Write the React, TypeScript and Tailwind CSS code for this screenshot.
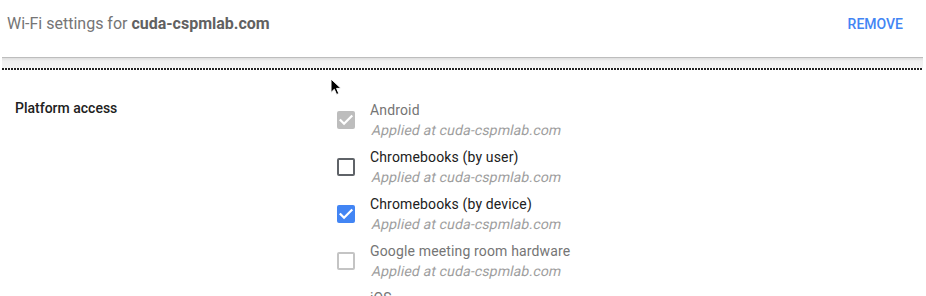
import React from "react";

type Platform = {
  name: string;
  state: "checked" | "unchecked" | "disabled-checked" | "disabled";
};

const PLATFORMS: Platform[] = [
  { name: "Android", state: "disabled-checked" },
  { name: "Chromebooks (by user)", state: "unchecked" },
  { name: "Chromebooks (by device)", state: "checked" },
  { name: "Google meeting room hardware", state: "disabled" },
  { name: "iOS", state: "disabled" },
];

function CheckMark() {
  return (
    <svg width="18" height="18" viewBox="0 0 24 24" fill="none">
      <path d="M4.8 12.3l4.6 4.6L19.3 7" stroke="white" strokeWidth="3" strokeLinecap="square" />
    </svg>
  );
}

function Box({ state }: { state: Platform["state"] }) {
  if (state === "checked") {
    return (
      <div className="w-[18px] h-[18px] rounded-[2px] bg-[#4285f4] flex items-center justify-center">
        <CheckMark />
      </div>
    );
  }
  if (state === "disabled-checked") {
    return (
      <div className="w-[18px] h-[18px] rounded-[2px] bg-[#bdbdbd] flex items-center justify-center">
        <CheckMark />
      </div>
    );
  }
  if (state === "disabled") {
    return <div className="w-[18px] h-[18px] rounded-[2px] border-2 border-[#c4c4c4]" />;
  }
  return <div className="w-[18px] h-[18px] rounded-[2px] border-2 border-[#5f6368]" />;
}

export default function App() {
  return (
    <div className="relative w-full h-[296px] overflow-hidden bg-white font-['Roboto',sans-serif]">
      {/* Header */}
      <div className="h-[57px] flex items-start justify-between pl-[7px] pr-[23px] pt-[14px]">
        <div className="text-[16px] leading-[20px] text-[#757575]">
          Wi-Fi settings for <span className="font-bold text-[#616161]">cuda-cspmlab.com</span>
        </div>
        <button className="text-[14px] leading-[20px] font-medium text-[#4285f4] uppercase">
          Remove
        </button>
      </div>

      {/* Divider band */}
      <div className="ml-[2px] mr-[3px]">
        <div className="h-[11px] border-t border-[#bdbdbd] bg-gradient-to-b from-[#dedede] via-[#f0f0f0] via-30% to-[#f3f3f3]" />
        <div className="h-[2px] bg-[repeating-linear-gradient(90deg,#222_0_2px,transparent_2px_3px)]" />
      </div>

      {/* Platform access */}
      <div className="flex pt-[28px]">
        <div className="w-[337px] pl-[15px] text-[14px] leading-[20px] font-medium text-[#212121]">
          Platform access
        </div>
        <div className="flex flex-col gap-[7px] pt-[2px]">
          {PLATFORMS.map(p => {
            const disabled = p.state === "disabled" || p.state === "disabled-checked";
            return (
              <div key={p.name} className="flex items-start gap-[15px]">
                <div className="mt-[11px]">
                  <Box state={p.state} />
                </div>
                <div className="tracking-[0.15px]">
                  <div className={`text-[14px] leading-[20px] ${disabled ? "text-[#757575]" : "text-[#212121]"}`}>
                    {p.name}
                  </div>
                  <div className="text-[14px] leading-[20px] text-[#9e9e9e]">
                    <span className="inline-block origin-bottom-left -skew-x-12">Applied at cuda-cspmlab.com</span>
                  </div>
                </div>
              </div>
            );
          })}
        </div>
      </div>

      {/* Mouse pointer */}
      <svg className="absolute left-[330px] top-[78px]" width="13" height="18" viewBox="0 0 13 18">
        <path d="M1 1v13.5l3.3-3.2 2.3 5.2 2.2-1-2.2-5.1H11z" fill="black" stroke="white" strokeWidth="1" />
      </svg>
    </div>
  );
}
